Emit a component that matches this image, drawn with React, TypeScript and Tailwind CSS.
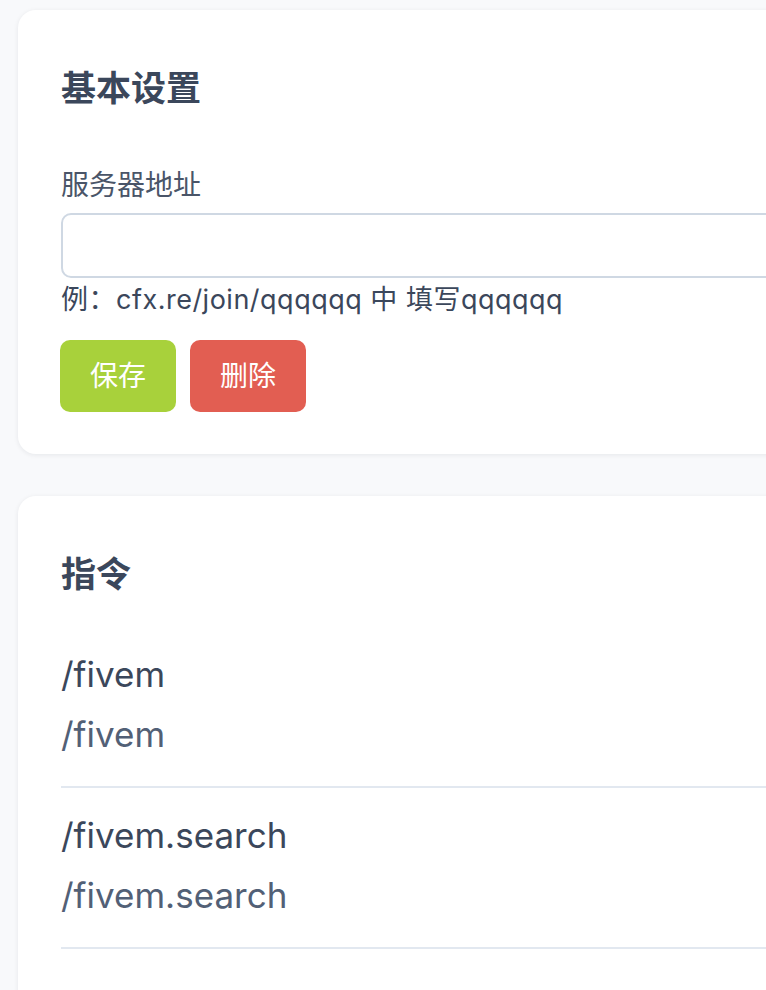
const font = { fontFamily: 'Inter, "Noto Sans CJK SC", sans-serif' }

const commands = [
  { name: "/fivem", desc: "/fivem" },
  { name: "/fivem.search", desc: "/fivem.search" },
]

function Card({ children }: { children: React.ReactNode }) {
  return (
    <div className="w-[800px] shrink-0 rounded-[18px] bg-white px-[43px] pt-[54px] shadow-[0_1px_5px_rgba(15,23,42,0.08)]">
      {children}
    </div>
  )
}

export default function App() {
  return (
    <div className="min-h-[990px] w-[766px] overflow-hidden bg-[#f8f9fb] pl-[18px] pt-[10px]" style={font}>
      <div className="flex flex-col gap-[42px]">
        <Card>
          <h2 className="text-[35px] font-bold leading-[48px] text-[#3b475b]">基本设置</h2>
          <div className="mt-[53px] pb-[42px]">
            <label className="block text-[28px] leading-[40px] text-[#4a5568]">服务器地址</label>
            <input
              className="mt-[8px] block h-[65px] w-full rounded-[10px] border-2 border-[#cfd8e3] bg-white px-4 text-[28px] outline-none"
              type="text"
            />
            <p className="mt-[4px] text-[27px] leading-[36px] tracking-[0.5px] text-[#3b475b]">
              例：cfx.re/join/qqqqqq 中 填写qqqqqq
            </p>
            <div className="-ml-px mt-[22px] flex gap-[14px]">
              <button className="h-[72px] w-[116px] rounded-[10px] bg-[#a8d13b] text-[28px] text-white">保存</button>
              <button className="h-[72px] w-[116px] rounded-[10px] bg-[#e25e52] text-[28px] text-white">删除</button>
            </div>
          </div>
        </Card>
        <Card>
          <h2 className="text-[35px] font-bold leading-[48px] text-[#3b475b]">指令</h2>
          <div className="mt-[29px]">
            {commands.map((c) => (
              <div key={c.name} className="border-b-2 border-[#e2e8f0] pb-[22px] pt-[17px]">
                <div className="text-[35px] leading-[60px] text-[#3b475b]">{c.name}</div>
                <div className="text-[35px] leading-[60px] text-[#526076]">{c.desc}</div>
              </div>
            ))}
          </div>
          <div className="h-[60px]" />
        </Card>
      </div>
    </div>
  )
}
